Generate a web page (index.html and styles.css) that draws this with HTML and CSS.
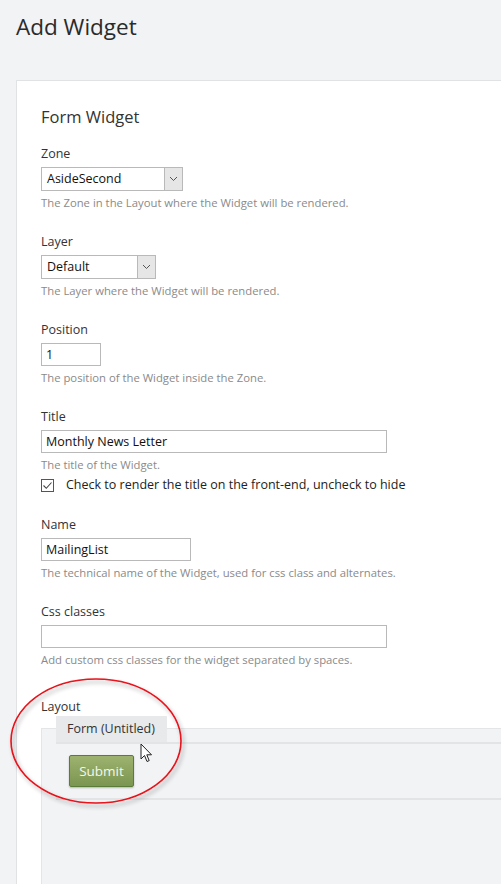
FILE: index.html
```
<!DOCTYPE html>
<html>
<head>
<meta charset="utf-8">
<link rel="stylesheet" href="styles.css">
</head>
<body>
<h1 class="page-title">Add Widget</h1>
<div class="card">
  <h2 class="card-title">Form Widget</h2>

  <div class="field">
    <label class="lbl">Zone</label>
    <div class="select sel-zone"><span class="sel-text">AsideSecond</span><span class="sel-btn"><svg width="9" height="6" viewBox="0 0 9 6"><path d="M1 1 L4.5 4.5 L8 1" fill="none" stroke="#555" stroke-width="1"/></svg></span></div>
    <div class="hint">The Zone in the Layout where the Widget will be rendered.</div>
  </div>

  <div class="field">
    <label class="lbl">Layer</label>
    <div class="select sel-layer"><span class="sel-text">Default</span><span class="sel-btn"><svg width="9" height="6" viewBox="0 0 9 6"><path d="M1 1 L4.5 4.5 L8 1" fill="none" stroke="#555" stroke-width="1"/></svg></span></div>
    <div class="hint">The Layer where the Widget will be rendered.</div>
  </div>

  <div class="field">
    <label class="lbl">Position</label>
    <div class="input in-pos">1</div>
    <div class="hint">The position of the Widget inside the Zone.</div>
  </div>

  <div class="field">
    <label class="lbl">Title</label>
    <div class="input in-wide">Monthly News Letter</div>
    <div class="hint">The title of the Widget.</div>
    <div class="check-row"><span class="checkbox"><svg width="11" height="11" viewBox="0 0 11 11"><path d="M1.5 5.5 L4.3 8.3 L9.5 2.5" fill="none" stroke="#444" stroke-width="1.1"/></svg></span><span class="check-text">Check to render the title on the front-end, uncheck to hide</span></div>
  </div>

  <div class="field">
    <label class="lbl">Name</label>
    <div class="input in-name">MailingList</div>
    <div class="hint">The technical name of the Widget, used for css class and alternates.</div>
  </div>

  <div class="field">
    <label class="lbl">Css classes</label>
    <div class="input in-wide"></div>
    <div class="hint">Add custom css classes for the widget separated by spaces.</div>
  </div>

  <div class="layout-field">
    <label class="lbl">Layout</label>
    <div class="layout-box">
      <div class="tab">Form (Untitled)</div>
      <div class="inner">
        <button class="submit">Submit</button>
      </div>
    </div>
    <svg class="annot" width="200" height="150" viewBox="0 0 200 150">
      <defs>
        <filter id="sh" x="-20%" y="-20%" width="140%" height="140%">
          <feGaussianBlur in="SourceAlpha" stdDeviation="2"/>
          <feOffset dx="2" dy="3" result="b"/>
          <feComponentTransfer><feFuncA type="linear" slope="0.35"/></feComponentTransfer>
          <feMerge><feMergeNode/><feMergeNode in="SourceGraphic"/></feMerge>
        </filter>
      </defs>
      <ellipse cx="95" cy="71" rx="85" ry="62" fill="none" stroke="#e8121a" stroke-width="1.6" filter="url(#sh)"/>
    </svg>
    <svg class="cursor" width="14" height="21" viewBox="0 0 14 21"><path d="M1 1 L1 16 L4.5 12.5 L7 18.5 L9.2 17.6 L6.8 11.8 L11.5 11.8 Z" fill="#fff" stroke="#222" stroke-width="1" stroke-linejoin="round"/></svg>
  </div>
</div>
</body>
</html>
```
FILE: styles.css
```
html, body { margin: 0; padding: 0; }
body {
  background: #f2f3f5;
  font-family: "Open Sans", "Noto Sans", sans-serif;
  color: #333;
  width: 501px;
  height: 884px;
  overflow: hidden;
}
.page-title {
  margin: 0;
  padding: 12px 0 0 16px;
  font-size: 22.5px;
  font-weight: 400;
  color: #2b2b2b;
  line-height: 30px;
  height: 68px;
}
.card {
  margin-left: 16px;
  width: 485px;
  background: #fff;
  border: 1px solid #e1e2e4;
  border-right: none;
  padding: 24px 0 0 24px;
  min-height: 810px;
  box-sizing: border-box;
  position: relative;
}
.card-title {
  margin: 0 0 16px 0;
  font-size: 16.5px;
  font-weight: 400;
  line-height: 24px;
  color: #333;
}
.field { margin-bottom: 22px; }
.lbl {
  display: block;
  font-size: 12.5px;
  line-height: 18px;
  color: #333;
  margin-bottom: 4px;
}
.select {
  display: flex;
  height: 24px;
  box-sizing: border-box;
  border: 1px solid #b9b9b9;
  background: #fff;
}
.sel-zone { width: 142px; }
.sel-layer { width: 115px; }
.sel-text {
  flex: 1;
  font-size: 12.5px;
  line-height: 22px;
  padding-left: 5px;
  color: #111;
}
.sel-btn {
  width: 17px;
  background: #e6e6e6;
  border-left: 1px solid #b9b9b9;
  display: flex;
  align-items: center;
  justify-content: center;
}
.input {
  height: 23px;
  box-sizing: border-box;
  border: 1px solid #b9b9b9;
  background: #fff;
  font-size: 12.5px;
  line-height: 21px;
  padding-left: 4px;
  color: #111;
}
.in-pos { width: 60px; }
.in-name { width: 150px; }
.in-wide { width: 346px; }
.hint {
  font-size: 11.3px;
  color: #8a8a8a;
  line-height: 16px;
  margin-top: 4px;
}
.check-row {
  display: flex;
  align-items: center;
  margin-top: 3px;
}
.checkbox {
  width: 13px;
  height: 13px;
  box-sizing: border-box;
  border: 1px solid #555;
  display: flex;
  align-items: center;
  justify-content: center;
  margin-right: 12px;
}
.check-text {
  font-size: 12.5px;
  line-height: 18px;
  color: #222;
}
.layout-field {
  position: relative;
  padding-top: 8px;
}
.layout-box {
  margin-top: 12px;
  background: #f2f3f5;
  border-top: 1px solid #e4e5e7;
  border-left: 1px solid #e4e5e7;
  min-height: 160px;
  padding: 0 0 0 14px;
}
.tab {
  display: block;
  width: fit-content;
  background: #e8e9eb;
  font-size: 12.5px;
  line-height: 26px;
  height: 26px;
  padding: 0 12px 0 11px;
  color: #333;
  margin-top: -13px;
}
.inner {
  border-top: 2px solid #e3e4e6;
  border-bottom: 2px solid #e3e4e6;
  height: 58px;
  padding: 11px 0 0 13px;
  box-sizing: border-box;
}
.submit {
  display: block;
  font-family: inherit;
  font-size: 13.5px;
  color: #f4f7ee;
  width: 65px;
  height: 32px;
  border: 1px solid #5b7c38;
  border-radius: 2px;
  background: linear-gradient(#9db26f, #7b9651);
  box-shadow: 0 1px 2px rgba(0,0,0,0.25);
  padding: 0;
}
.annot {
  position: absolute;
  left: -40px;
  top: -20px;
  pointer-events: none;
}
.cursor {
  position: absolute;
  left: 99px;
  top: 53px;
}
```
